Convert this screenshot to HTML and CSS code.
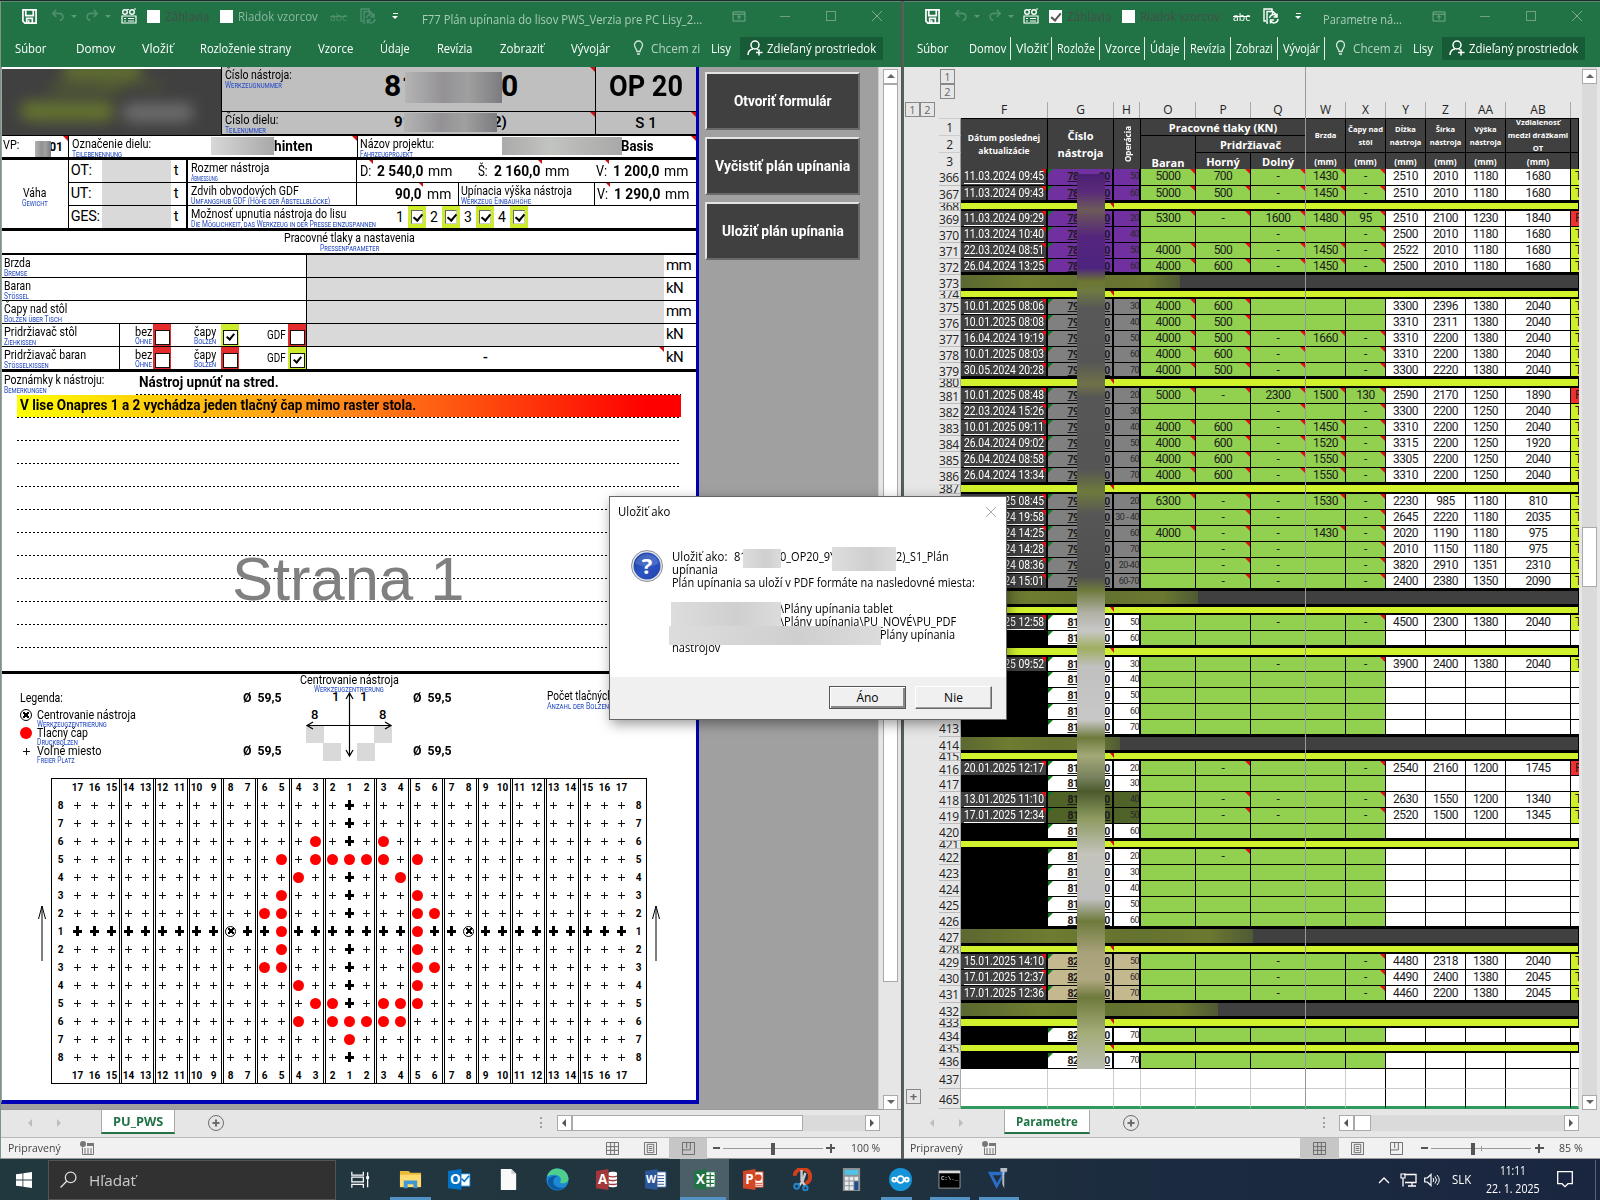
FILE: index.html
```html
<!DOCTYPE html>
<html lang="sk">
<head>
<meta charset="utf-8">
<title>Plán upínania</title>
<link rel="stylesheet" href="styles.css">
</head>
<body>
<svg class="defs" width="0" height="0">
  <symbol id="save" viewBox="0 0 16 16"><path d="M1 1h14v14H3l-2-2zM4 1v6h8V1M5 15v-5h6v5" fill="none" stroke="currentColor" stroke-width="1.8"/><path d="M6 12h2v3H6z" fill="currentColor"/></symbol>
  <symbol id="undo" viewBox="0 0 16 16"><path d="M6 1L2 5l4 4M2 5h7c6 0 6 7 1 8" fill="none" stroke="currentColor" stroke-width="1.8"/></symbol>
  <symbol id="redo" viewBox="0 0 16 16"><path d="M10 1l4 4-4 4M14 5H7C1 5 1 12 6 13" fill="none" stroke="currentColor" stroke-width="1.8"/></symbol>
  <symbol id="cam" viewBox="0 0 16 16"><path d="M1 8h14v7H1z" fill="none" stroke="currentColor" stroke-width="1.2"/><circle cx="4" cy="4" r="2.3" fill="none" stroke="currentColor" stroke-width="1.4"/><circle cx="11" cy="4" r="2.3" fill="none" stroke="currentColor" stroke-width="1.4"/><path d="M3 10.500h2M7 10.500h6M3 13h2M7 13h6M6 1.500h2M13 1h2" stroke="currentColor" stroke-width="1"/></symbol>
  <symbol id="docs" viewBox="0 0 16 16"><path d="M3 13H1V1h8v2M5 15H4V3.500h6l3 3M9.500 3.500V6" fill="none" stroke="currentColor" stroke-width="1.4"/><path d="M6.500 10a4 4 0 0 1 7-2M14 5.500V9h-3.500M15 11a4 4 0 0 1-7 2.500M7.500 15.500V12H11" fill="none" stroke="currentColor" stroke-width="1.5"/></symbol>
  <symbol id="bulb" viewBox="0 0 10 16"><path d="M3.500 11.500C3.500 9 1 8 1 5a4 4 0 0 1 8 0c0 3-2.500 4-2.500 6.500zM3.500 14h3" fill="none" stroke="currentColor" stroke-width="1.300"/></symbol>
  <symbol id="user" viewBox="0 0 16 16"><circle cx="8" cy="5" r="4" fill="none" stroke="currentColor" stroke-width="1.500"/><path d="M1 15c0-3.500 2-5.500 5-6M10 9l1.500 1M12 9.500v6M9 12.500h6.500" fill="none" stroke="currentColor" stroke-width="1.500"/></symbol>
  <symbol id="ribbon" viewBox="0 0 14 12"><path d="M.5 1h13v10H.5zM.5 3.500h13M7 9.500V5M5 7l2-2 2 2" fill="none" stroke="currentColor"/></symbol>
  <symbol id="vgrid" viewBox="0 0 14 14"><path d="M.5.5h13v13H.5zM.5 5h13M.5 9h13M5 .5v13M9 .5v13" fill="none" stroke="currentColor"/></symbol>
  <symbol id="vpage" viewBox="0 0 14 14"><path d="M.5.5h13v13H.5zM3.500 2.500h7v9h-7zM5 5h4M5 7h4M5 9h4" fill="none" stroke="currentColor"/></symbol>
  <symbol id="vbreak" viewBox="0 0 14 14"><path d="M.5.5h13v13H.5zM.5 8.500h8.500V.5M5 .5v6" fill="none" stroke="currentColor"/></symbol>
  <symbol id="macro" viewBox="0 0 14 14"><path d="M2.500 6.500v7h11v-11H7" fill="none" stroke="currentColor"/><path d="M7 2h7v3H7z" fill="currentColor"/><circle cx="3" cy="3" r="3" fill="currentColor"/><path d="M4 8h8M4 10h8M4 12h8" stroke="currentColor" stroke-dasharray="2 1"/></symbol>
  <symbol id="plusc" viewBox="0 0 18 18"><circle cx="9" cy="9" r="7.500" fill="none" stroke="currentColor"/><path d="M9 5.500v7M5.500 9h7" stroke="currentColor" stroke-width="2"/></symbol>
</svg>

<main class="desktop">
<section class="win win-left">
  <header class="ribbon">
    <div class="qat">
      <svg class="i-save"><use href="#save"/></svg><svg class="i16 dim"><use href="#undo"/></svg><i class="dd"></i><svg class="i16 dim"><use href="#redo"/></svg><i class="dd"></i><svg class="i-cam"><use href="#cam"/></svg>
      <span class="cb"></span><span class="q1" data-w="44">Záhlavia</span><span class="cb"></span><span class="q2 lit" data-w="80">Riadok vzorcov</span><s class="dim" data-w="17">abc</s><svg class="i-docs dim"><use href="#docs"/></svg><i class="more"></i>
      <span class="title" data-w="280">F77 Plán upínania do lisov PWS_Verzia pre PC Lisy_2...</span>
      <svg class="wc"><use href="#ribbon"/></svg><i class="min"></i><i class="max"></i><svg class="x" viewBox="0 0 10 10"><path d="M0 0l10 10M10 0L0 10"/></svg>
    </div>
    <nav class="tabs">
      <span data-w="31">Súbor</span><span class="dom" data-w="39">Domov</span><span data-w="31">Vložiť</span><span data-w="91">Rozloženie strany</span><span data-w="35">Vzorce</span><span data-w="30">Údaje</span><span data-w="36">Revízia</span><span data-w="44">Zobraziť</span><span data-w="39">Vývojár</span>
      <svg class="bulb"><use href="#bulb"/></svg><span class="tell" data-w="49">Chcem zi</span><span class="lisy" data-w="20">Lisy</span>
      <div class="share"><svg><use href="#user"/></svg><span data-w="109">Zdieľaný prostriedok</span></div>
    </nav>
  </header>

  <div class="work">
    <article class="sheet">
      <div class="head">
        <div class="logo"><i></i><i></i><i></i></div>
        <div class="hc num"><div class="lab"><span data-w="67">Číslo nástroja:</span><small data-w="57">Werkzeugnummer</small></div><strong class="big l">81</strong><strong class="big e">0</strong><i class="smear s1"></i><i class="tri"></i></div>
        <div class="hc op"><strong class="big" data-w="74">OP 20</strong></div>
        <div class="hc part"><div class="lab"><span data-w="53">Číslo dielu:</span><small data-w="41">Teilenummer</small></div><strong class="mid l">91</strong><strong class="mid e">2)</strong><i class="smear s2"></i><i class="tri"></i></div>
        <div class="hc s"><strong class="mid">S 1</strong><i class="tri"></i></div>
      </div>
      <div class="row vp">
        <div class="c vp1"><span data-w="16">VP:</span><strong>01</strong><i class="smear s3"></i><i class="tri"></i></div>
        <div class="c vp2"><div class="lab"><span data-w="79">Označenie dielu:</span><small data-w="50">Teilebenennung</small></div><i class="smear s4"></i><strong data-w="39">hinten</strong><i class="tri"></i></div>
        <div class="c vp3"><div class="lab"><span data-w="74">Názov projektu:</span><small data-w="53">Fahrzeugprojekt</small></div><i class="smear s5"></i><strong data-w="33">Basis</strong><i class="tri"></i></div>
      </div>
      <div class="dims">
        <div class="weight"><span data-w="23">Váha</span><small data-w="26">Gewicht</small></div>
        <div class="wt"><div><span>OT:</span><em></em><u>t</u></div><div><span>UT:</span><em></em><u>t</u></div><div><span>GES:</span><em></em><u>t</u></div></div>
        <div class="dr">
          <div class="line"><div class="lab a"><span data-w="78">Rozmer nástroja</span><small data-w="27">Abmessung</small></div>
            <div class="m bl"><span data-w="11">D:</span><b class="rt" data-w="46">2 540,0</b><span data-w="24">mm</span></div><div class="m m2"><span data-w="10">Š:</span><b class="rt" data-w="46">2 160,0</b><span data-w="24">mm</span></div><div class="m m3"><span data-w="11">V:</span><b class="rt" data-w="46">1 200,0</b><span data-w="24">mm</span></div></div>
          <div class="line"><div class="lab a"><span data-w="108">Zdvih obvodových GDF</span><small data-w="139">Umfangshub GDF (Höhe der Abstellblöcke)</small></div>
            <div class="m bl z"><b class="rt" data-w="27">90,0</b><span data-w="24">mm</span></div><div class="lab upin"><span data-w="111">Upínacia výška nástroja</span><small data-w="70">Werkzeug Einbauhöhe</small></div><div class="m bl m4"><span data-w="11">V:</span><b class="rt" data-w="46">1 290,0</b><span data-w="24">mm</span></div></div>
          <div class="line"><div class="lab poss"><span data-w="155">Možnosť upnutia nástroja do lisu</span><small data-w="185">Die Möglichkeit, das Werkzeug in der Presse einzuspannen</small></div>
            <div class="checks"><span>1</span><i class="ck on"></i><span>2</span><i class="ck on"></i><span>3</span><i class="ck on"></i><span>4</span><i class="ck on"></i></div></div>
        </div>
      </div>
      <div class="sect"><span class="mid-o" data-w="131">Pracovné tlaky a nastavenia</span><small class="mid-o" data-w="59">Pressenparameter</small></div>
      <div class="press">
        <div class="pr"><div class="lab"><span data-w="27">Brzda</span><small data-w="23">Bremse</small></div><em></em><u>mm</u></div>
        <div class="pr"><div class="lab"><span data-w="27">Baran</span><small data-w="25">Stössel</small></div><em></em><u>kN</u></div>
        <div class="pr"><div class="lab"><span data-w="63">Čapy nad stôl</span><small data-w="58">Bolzen über Tisch</small></div><em></em><u>mm</u></div>
        <div class="pr"><div class="lab half"><span data-w="73">Pridržiavač stôl</span><small data-w="32">Ziehkissen</small></div><div class="opt"><p><span data-w="17">bez</span><small data-w="17">Ohne</small></p><i class="bx red"></i><p><span data-w="22">čapy</span><small data-w="22">Bolzen</small></p><i class="bx yes"></i><p><span class="gd" data-w="19">GDF</span></p><i class="bx red"></i></div><em></em><u>kN</u></div>
        <div class="pr"><div class="lab half"><span data-w="82">Pridržiavač baran</span><small data-w="45">Stösselkissen</small></div><div class="opt"><p><span data-w="17">bez</span><small data-w="17">Ohne</small></p><i class="bx red"></i><p><span data-w="22">čapy</span><small data-w="22">Bolzen</small></p><i class="bx red"></i><p><span class="gd" data-w="19">GDF</span></p><i class="bx yes"></i></div><em class="blank">-<i class="tri"></i></em><u>kN</u></div>
      </div>
      <div class="notes">
        <div class="n0"><div class="lab"><span data-w="100">Poznámky k nástroju:</span><small data-w="43">Bemerkungen</small></div><b><span data-w="140">Nástroj upnúť na stred.</span></b></div>
        <div class="nl hot"><span data-w="396">V lise Onapres 1 a 2 vychádza jeden tlačný čap mimo raster stola.</span></div>
        <div class="nl"></div><div class="nl"></div><div class="nl"></div><div class="nl"></div><div class="nl"></div><div class="nl"></div><div class="nl"></div><div class="nl"></div><div class="nl"></div><div class="nl"></div>
        <div class="water">Strana 1</div>
      </div>
      <div class="legend">
        <div class="lg"><span class="lt" data-w="43">Legenda:</span>
          <div><i class="ox"></i><p><span data-w="99">Centrovanie nástroja</span><small data-w="70">Werkzeugzentrierung</small></p></div>
          <div><i class="dot"></i><p><span data-w="51">Tlačný čap</span><small data-w="41">Druckbolzen</small></p></div>
          <div><i class="pl"></i><p><span data-w="64">Voľné miesto</span><small data-w="38">Freier Platz</small></p></div></div>
        <div class="dia"><b data-w="39">Ø&nbsp; 59,5</b><b data-w="39">Ø&nbsp; 59,5</b></div>
        <div class="center"><span class="mid-o" data-w="99">Centrovanie nástroja</span><small class="mid-o" data-w="70">Werkzeugzentrierung</small>
          <svg width="90" height="70" viewBox="0 0 90 70"><path d="M2 33h18v18H2zM19 51h18v18H19zM53 51h18v18H53zM70 33h18v18H70z" fill="#d9d9d9"/><path d="M45.500 1v63M3 33.500h84M42 7l3.500-6L49 7M42 58l3.500 6 3.500-6M9 30l-6 3.500L9 37M81 30l6 3.500-6 3.500" fill="none" stroke="#000" stroke-width="1.200"/><g font-family="Roboto" font-weight="500" font-size="13"><text x="28" y="9">1</text><text x="56" y="9">1</text><text x="7" y="27">8</text><text x="75" y="27">8</text></g></svg></div>
        <div class="dia d2"><b data-w="39">Ø&nbsp; 59,5</b><b data-w="39">Ø&nbsp; 59,5</b></div>
        <div class="lab cnt"><span data-w="95">Počet tlačných čapov</span><small data-w="64">Anzahl der Bolzen-</small></div>
      </div>
      <div class="boardrow"><svg class="arr" viewBox="0 0 10 56"><path d="M5 56V1M1.500 14L5 1l3.500 13" fill="none" stroke="#000"/></svg><div class="board" id="board"></div><svg class="arr" viewBox="0 0 10 56"><path d="M5 56V1M1.500 14L5 1l3.500 13" fill="none" stroke="#000"/></svg></div>
    </article>
    <aside class="btns"><button><span data-w="98">Otvoriť formulár</span></button><button><span data-w="135">Vyčistiť plán upínania</span></button><button><span data-w="122">Uložiť plán upínania</span></button></aside>
    <div class="vs"><i class="up"></i><i class="th"></i><i class="dn"></i></div>
  </div>

  <div class="sheets"><i class="na"></i><i class="na nx"></i><b class="tab"><span data-w="50">PU_PWS</span></b><svg class="pc"><use href="#plusc"/></svg><i class="dots"></i><div class="hs"><i class="lf"></i><i class="ht"></i><i class="rb"></i></div></div>
  <div class="status"><span data-w="53">Pripravený</span><svg class="mc"><use href="#macro"/></svg><div class="vw"><i><svg><use href="#vgrid"/></svg></i><i><svg><use href="#vpage"/></svg></i><i class="on"><svg><use href="#vbreak"/></svg></i></div><i class="zm"></i><div class="zl"><i></i></div><i class="zp"></i><span class="pct" data-w="29">100 %</span></div>
</section>

<section class="win win-right">
  <header class="ribbon">
    <div class="qat">
      <svg class="i-save"><use href="#save"/></svg><svg class="i16 dim"><use href="#undo"/></svg><i class="dd"></i><svg class="i16 dim"><use href="#redo"/></svg><i class="dd"></i><svg class="i-cam"><use href="#cam"/></svg>
      <span class="cb on"></span><span class="q1" data-w="44">Záhlavia</span><span class="cb"></span><span class="q2" data-w="80">Riadok vzorcov</span><s data-w="17">abc</s><svg class="i-docs"><use href="#docs"/></svg><i class="more"></i>
      <span class="title" data-w="79">Parametre ná...</span>
      <svg class="wc"><use href="#ribbon"/></svg><i class="min"></i><i class="max"></i><svg class="x" viewBox="0 0 10 10"><path d="M0 0l10 10M10 0L0 10"/></svg>
    </div>
    <nav class="tabs tight">
      <span data-w="31">Súbor</span><span class="t" data-w="37">Domov</span><span class="t" data-w="31">Vložiť</span><span class="t" data-w="38">Rozlože</span><span class="t" data-w="35">Vzorce</span><span class="t" data-w="30">Údaje</span><span class="t" data-w="36">Revízia</span><span class="t" data-w="37">Zobrazi</span><span class="t" data-w="37">Vývojár</span>
      <svg class="bulb"><use href="#bulb"/></svg><span class="tell" data-w="49">Chcem zi</span><span class="lisy" data-w="20">Lisy</span>
      <div class="share"><svg><use href="#user"/></svg><span data-w="109">Zdieľaný prostriedok</span></div>
    </nav>
  </header>
  <div class="work2">
    <div class="outl"><div class="ob"><i>1</i><i>2</i></div><div class="oe"><i>+</i></div></div>
    <div class="grid" id="grid"></div>
    <div class="vs v2"><i class="up"></i><i class="th"></i><i class="dn"></i></div>
  </div>
  <div class="sheets"><i class="na"></i><i class="na nx"></i><b class="tab"><span data-w="62">Parametre</span></b><svg class="pc"><use href="#plusc"/></svg><i class="dots"></i><div class="hs"><i class="lf"></i><i class="ht"></i><i class="rb"></i></div></div>
  <div class="status"><span data-w="53">Pripravený</span><svg class="mc"><use href="#macro"/></svg><div class="vw"><i class="on"><svg><use href="#vgrid"/></svg></i><i><svg><use href="#vpage"/></svg></i><i><svg><use href="#vbreak"/></svg></i></div><i class="zm"></i><div class="zl"><i></i></div><i class="zp"></i><span class="pct" data-w="24">85 %</span></div>
</section>
</main>

<div class="dialog">
  <div class="dt"><span data-w="52">Uložiť ako</span><svg viewBox="0 0 10 10"><path d="M0 0l10 10M10 0L0 10"/></svg></div>
  <div class="db">
    <svg class="q" viewBox="0 0 32 32"><defs><linearGradient id="qb" x1="0" y1="0" x2="1" y2="1"><stop offset="0" stop-color="#1c3f9e"/><stop offset=".5" stop-color="#2b55c4"/><stop offset="1" stop-color="#2340a8"/></linearGradient></defs><circle cx="16" cy="16" r="15.500" fill="#e4e6ea" stroke="#8b8f98"/><circle cx="16" cy="16" r="13.500" fill="url(#qb)"/><path d="M4 13a12.500 12.500 0 0 1 24 0c-8 5-16 5-24 0" fill="#fff" opacity=".15"/><text x="16" y="24" text-anchor="middle" font-family="Open Sans" font-weight="700" font-size="22" fill="#fff">?</text></svg>
    <div class="msg">
      <p><span data-w="55">Uložiť ako:</span><span class="f" data-w="13">81</span><i class="sm a"></i><span data-w="56">0_OP20_9Y</span><i class="sm b"></i><span data-w="53">2)_S1_Plán</span></p>
      <p><span data-w="46">upínania</span></p>
      <p><span data-w="303">Plán upínania sa uloží v PDF formáte na nasledovné miesta:</span></p>
      <p></p>
      <p class="i1"><span data-w="113">\Plány upínania tablet</span></p>
      <p class="i1"><span data-w="176">\Plány upínania\PU_NOVÉ\PU_PDF</span></p>
      <p class="i2"><span data-w="75">Plány upínania</span></p>
      <p><span data-w="48">nástrojov</span></p>
      <i class="sm c"></i><i class="sm d"></i>
    </div>
  </div>
  <div class="df"><button class="def">Áno</button><button>Nie</button></div>
</div>

<footer class="task">
  <svg class="start" viewBox="0 0 16 16"><path d="M0 2.300l6.500-.9v6.200H0zM7.300 1.300L16 0v7.600H7.300zM0 8.400h6.500v6.200L0 13.700zM7.300 8.400H16V16l-8.700-1.300z" fill="#fff"/></svg>
  <div class="search"><svg viewBox="0 0 16 16"><circle cx="10" cy="6" r="5" fill="none" stroke="#ddd" stroke-width="1.200"/><path d="M6.500 9.500L.5 15.500" stroke="#ddd" stroke-width="1.300"/></svg><span data-w="47">Hľadať</span></div>
  <div class="apps">
    <i><svg viewBox="0 0 24 24"><path d="M4 4v3.500h12V4M4 20.500V17h12v3.500M4 9.500h12v5H4zM20.500 4.500v15.500" fill="none" stroke="#fff" stroke-width="1.300"/><path d="M19 8.500h3v3h-3z" fill="#fff"/></svg></i>
    <i class="run"><svg viewBox="0 0 24 24"><path d="M1 3h9l2 2h11v14H1z" fill="#e9b93a"/><path d="M1 7h22v13H1z" fill="#ffdb70"/><path d="M5 21v-8h14v8h-4v-4H9v4z" fill="#3f97d3"/></svg></i>
    <i><svg viewBox="0 0 24 24"><path d="M12 6h11v13H12z" fill="#fff" stroke="#0072c6"/><path d="M14 11l3 3 5-6" stroke="#0072c6" stroke-width="1.600" fill="none"/><path d="M0 3l14-2v22L0 21z" fill="#0072c6"/><text x="2" y="17" class="gl">O</text></svg></i>
    <i><svg viewBox="0 0 24 24"><path d="M4 1h11l5 5v17H4z" fill="#fafafa"/><path d="M15 1v5h5" fill="#ccc"/></svg></i>
    <i><svg viewBox="0 0 24 24"><circle cx="12" cy="12" r="11.500" fill="#1b8ad3"/><path d="M1 9C4-3 22-2 23.500 11c0 5-6 6-9 4 3-4-1-8-6-8-3 0-6 1-7.500 2" fill="#4fcf8d"/><path d="M8 12c-2 6 4 10 12 8-7 6-17 2-18-6 0-4 6-7 10-5-2 0-3.500 1-4 3" fill="#0c59a4"/></svg></i>
    <i><svg viewBox="0 0 24 24"><path d="M14 5c2-1.500 7-1.500 9 0v14c-2 1.500-7 1.500-9 0z" fill="#fff"/><path d="M14 8.500c2 1 7 1 9 0M14 12.500c2 1 7 1 9 0M14 16.500c2 1 7 1 9 0" fill="none" stroke="#a4373a" stroke-width="1.500"/><path d="M1 3l13-2v22L1 21z" fill="#a4373a"/><text x="3" y="17" class="gl">A</text></svg></i>
    <i><svg viewBox="0 0 24 24"><path d="M12 4h11v16H12z" fill="#fff" stroke="#2b579a"/><path d="M14 8h7M14 11h7M14 14h7M14 17h7" stroke="#2b579a"/><path d="M1 3l13-2v22L1 21z" fill="#2b579a"/><text x="2" y="16" class="gl sw">W</text></svg></i>
    <i class="act"><svg viewBox="0 0 24 24"><path d="M12 4h11v16H12z" fill="#fff" stroke="#217346"/><path d="M13 8h9M13 12h9M13 16h9M18 5v14" stroke="#217346" stroke-width="1.300"/><path d="M1 3l13-2v22L1 21z" fill="#217346"/><text x="3" y="17" class="gl">X</text></svg></i>
    <i><svg viewBox="0 0 24 24"><path d="M12 4h10v16H12z" fill="#fff" stroke="#d24726"/><circle cx="17" cy="10" r="3.500" fill="#d24726"/><path d="M14 16h7M14 18h7" stroke="#d24726"/><path d="M1 3l13-2v22L1 21z" fill="#d24726"/><text x="3.500" y="17" class="gl">P</text></svg></i>
    <i><svg viewBox="0 0 24 24"><path d="M4 8C4-1 20-2 20 9c0 4-2 6-5 7" stroke="#d5401c" stroke-width="4" fill="none"/><path d="M11 2v11l4 6M15 5l-3 9-4 5" stroke="#c8ccd0" stroke-width="2.500" fill="none"/><circle cx="6" cy="19" r="2.600" fill="none" stroke="#2387d0" stroke-width="2"/><circle cx="15" cy="21" r="2.300" fill="none" stroke="#2387d0" stroke-width="2"/></svg></i>
    <i><svg viewBox="0 0 24 24"><path d="M3 0h18v24H3z" fill="#8a9196"/><path d="M5 2h14v5H5z" fill="#4fc3e8"/><path d="M5 9h4v4H5zM10 9h4v4h-4zM15 9h4v4h-4zM5 14h4v4H5zM10 14h4v4h-4zM5 19h4v4H5zM10 19h4v4h-4z" fill="#e8eaec"/><path d="M15 14h4v9h-4z" fill="#1d4d8c"/></svg></i>
    <i class="run sh"><svg viewBox="0 0 24 24"><circle cx="12" cy="12" r="12" fill="#1593d8"/><g fill="none" stroke="#fff" stroke-width="2"><circle cx="12" cy="12" r="3.500"/><circle cx="5.500" cy="12" r="2"/><circle cx="18.500" cy="12" r="2"/></g></svg></i>
    <i class="run"><svg viewBox="0 0 24 24"><path d="M1 3h22v18H1z" fill="#000" stroke="#9a9a9a"/><path d="M1 3h22v2.500H1z" fill="#ddd"/><text x="3" y="12" font-family="Liberation Mono" font-size="6" fill="#fff">C:\._</text></svg></i>
    <i class="run"><svg viewBox="0 0 24 24"><path d="M1 4h19L10 22zM6 7.500l4.500 8 4.500-8z" fill="#2b6cc4" fill-rule="evenodd"/><path d="M14 0h7v4h-3v17l-2-4V4h-2z" fill="#b9bec4"/></svg></i>
  </div>
  <div class="tray">
    <svg class="chev" viewBox="0 0 12 8"><path d="M1 7l5-5 5 5" fill="none" stroke="#fff" stroke-width="1.300"/></svg>
    <svg class="net" viewBox="0 0 17 14"><path d="M4 1.500h12v8H5M3 5v8.500M8 13h8M12 9.500V13" fill="none" stroke="#fff" stroke-width="1.300"/><path d="M1 1h4v4H1z" fill="none" stroke="#fff" stroke-width="1.200"/></svg>
    <svg class="snd" viewBox="0 0 17 14"><path d="M.7 5h2.600L7 1.500v11L3.300 9H.7z" fill="none" stroke="#fff" stroke-width="1.200"/><path d="M9 5q1.500 2 0 4M11 3.500q3 3.500 0 7M13 2q4.500 5 0 10" fill="none" stroke="#fff"/></svg>
    <span class="slk" data-w="19">SLK</span>
    <div class="clk"><span class="mid-o" data-w="26">11:11</span><span class="mid-o" data-w="54">22. 1. 2025</span></div>
    <svg class="note" viewBox="0 0 16 17"><path d="M.7.7h14.600v12H11l-3 3-3-3H.7z" fill="none" stroke="#fff" stroke-width="1.300"/></svg>
  </div>
</footer>
<script src="script.js"></script>
</body>
</html>
```
FILE: styles.css
```css
*{box-sizing:border-box}
body{margin:0;width:1600px;height:1200px;overflow:hidden;background:#1c2a2c;font-family:"Open Sans","Noto Sans",sans-serif;font-size:12px;display:flex;flex-direction:column}
i,u,s,em{font-style:normal;text-decoration:none}
p{margin:0}
svg{display:block;flex:none}
.defs{position:absolute}
[data-w]{display:inline-block;white-space:nowrap;flex:none}
[data-w]>span{display:inline-block;transform-origin:0 50%}
.mid-o{align-self:center}
.desktop{display:flex;height:1159px;padding-top:1px}
.win{display:flex;flex-direction:column;background:#e6e6e6}
.win-left{width:902px;border-left:1px solid #7d9587;border-right:1px solid #555}
.win-right{width:698px;border-left:2px solid #55605a}
.ribbon{height:66px;background:#217346;color:#fff;border-top:1px solid #5d8a70}
.qat{display:flex;align-items:center;height:28px}
.qat>*{flex:none}
.i-save{width:15px;height:15px;margin-left:21px}
.i16{width:14px;height:14px;margin-left:14px}
.i16+.dd+.i16{margin-left:8px}
.dim{color:#4f8f6d}
.dd{border:3px solid transparent;border-top-color:#5d9878;border-bottom:0;margin-left:6px}
.i-cam{width:16px;height:16px;margin-left:9px}
.win-left .i-cam{margin-left:10px}
.cb{width:13px;height:13px;background:#fff;margin-left:10px}
.cb.on::after{content:"";display:block;width:4px;height:8px;border:solid #555;border-width:0 2px 2px 0;margin:1px 0 0 4px;transform:rotate(40deg)}
.qat .q1{margin-left:5px;color:#444d48}
.q1+.cb{margin-left:11px}
.qat .q2{margin-left:5px;color:#444d48}
.qat .q2.lit{color:#8cb8a0}
.qat s{margin-left:13px;font-size:11px}
.win-left .qat s{margin-left:12px}
.qat s>span{text-decoration:line-through}
.i-docs{width:16px;height:16px;margin-left:13px}
.more{width:5px;height:7px;margin-left:17px;border-top:1px solid #fff;position:relative}
.more::after{content:"";position:absolute;top:2px;left:-1px;border:3.500px solid transparent;border-top-color:#fff;border-bottom:0}
.qat .title{margin-left:24px;padding-top:7px;color:#a9cdb9}
.win-right .qat .title{margin-left:22px}
.wc{width:14px;height:11px;margin-left:30px;color:#7fae94}
.min{width:10px;height:1px;background:#6ea286;margin-left:34px}
.max{width:10px;height:10px;border:1px solid #6ea286;margin-left:36px}
.x{width:10px;height:10px;margin-left:36px;stroke:#7fae94;fill:none;overflow:visible}
.tabs{display:flex;align-items:center;height:36px;padding-left:14px;gap:27px;font-size:12px}
.tabs .dom{margin-left:3px}
.tabs .bulb{width:11px;height:16px;margin-left:-4px;color:#d5e6dc}
.tabs .tell{margin-left:-20px;color:#b5d3c2}
.tabs .lisy{margin-left:-16px}
.share{display:flex;align-items:center;gap:4px;margin-left:-18px;background:#185c37;width:143px;height:23px;padding-left:7px}
.share svg{width:16px;height:16px}
.tabs.tight{gap:0;padding-left:13px}
.tight .t{border-right:1px solid #e4efe8;height:23px;line-height:23px;box-sizing:content-box;padding:0 4px 0 5px}
.tight>.t:nth-child(2){margin-left:16px}
.tight .bulb{margin-left:10px}
.tight .tell{margin-left:7px}.tight .lisy{margin-left:11px}.tight .share{margin-left:9px}
.work{display:flex;height:1043px;background:#a0a0a0;border-bottom:1px solid #999}
.sheet{width:698px;height:1037px;border:solid #0000b4;border-width:0 3px 4px 0;border-left:1px solid #a0a0a0;background:#fff;font-family:Roboto,"Liberation Sans",sans-serif;font-size:13.500px;color:#000;flex:none;overflow:hidden}
.sheet small{font-variant:small-caps;font-size:9.500px;line-height:8px;color:#2a4fc4;height:8px;display:block}
.lab{display:flex;flex-direction:column;line-height:13px;padding:1px 0 0 3px;position:relative}
.tri{position:absolute;right:0;top:0;border:5px solid transparent;border-width:0 5px 5px 0;border-right-color:#d01010}
.smear{position:absolute;background:linear-gradient(90deg,#b4b4b4,#939195 40%,#a0a0a0 65%,#7c7b80);z-index:1}
.head{display:grid;grid-template-columns:219px 374px 1fr;grid-template-rows:45px 23px;height:69px;border-bottom:1px solid #000}
.logo{grid-row:1/3;background:#404040;position:relative;overflow:hidden;margin-top:2px}
.logo i{position:absolute;filter:blur(7px);background:#64732f;border-radius:20px}
.logo i:nth-child(1){left:60px;top:-6px;width:80px;height:16px;box-shadow:-16px 18px 0 -4px #56622f,28px 14px 0 -6px #56622f}
.logo i:nth-child(2){left:18px;top:32px;width:95px;height:20px}
.logo i:nth-child(3){left:120px;top:34px;width:72px;height:19px;background:#6c6c6e}
.hc{background:#bfbfbf;border:solid #000;border-width:0 0 1px 1px;position:relative}
.hc.op,.hc.s{display:flex;align-items:center;justify-content:center}
.hc.op{padding-bottom:6px}
.big{font-size:30px;font-weight:700;line-height:36px}
.num .big{position:absolute;top:1px}.num .big.l{left:162px}.num .big.e{left:279px}
.s1{left:183px;top:5px;width:97px;height:31px}
.mid{font-size:15px;font-weight:500}
.part .mid{position:absolute;top:1px;font-weight:700}.part .l{left:172px}.part .e{left:271px}
.s2{left:182px;top:1px;width:93px;height:19px}
.row{display:flex}
.vp{height:24px;border-bottom:3px solid #000}
.c{position:relative}
.vp1{width:66px;padding:2px 0 0 1px;line-height:12px}
.vp1 strong{position:absolute;right:5px;top:5px;font-size:12px}
.s3{left:33px;top:5px;width:16px;height:16px}
.vp2{width:289px;border-left:1px solid #000}
.vp2 strong,.vp3 strong{position:absolute;top:2px;left:205px;font-size:14px}
.vp3{flex:1;border-left:1px solid #000}.vp3 strong{left:263px}
.vp3 .lab{padding-left:2px}
.s4{left:142px;top:1px;width:63px;height:18px;background:linear-gradient(90deg,#d8d8d8,#a8a8a8)}
.s5{left:144px;top:1px;width:120px;height:18px;background:linear-gradient(90deg,#aaa,#c2c4c0 40%,#a8a8a8)}
.dims{display:flex;height:71px;border-bottom:3px solid #000}
.weight{width:66px;display:flex;flex-direction:column;align-items:center;padding-top:25px;line-height:14px}
.wt{width:121px;border:solid #000;border-width:0 2px 0 1px}
.wt div{display:flex;height:23px;border-bottom:1px solid #000;line-height:21px;font-size:14.500px}
.wt div:last-child{border:0}
.wt span{width:33px;padding-left:2px;letter-spacing:-.3px}
.wt em{width:69px;height:22px;background:#d9d9d9}
.wt u{padding-left:3px}
.dr{flex:1}
.line{display:flex;height:23px;border-bottom:1px solid #000}
.line:last-child{border:0}
.line .a{width:168px}
.m{display:flex;align-items:center;font-size:15px;gap:5px;padding-left:3px;width:102px}
.bl{border-left:1px solid #000}
.m span:first-child{margin-right:1px}
.m.m2{margin-left:17px}.m.m3{margin-left:16px}
.m b,.nl,.n0 b{font-weight:700}
.m b.rt{position:relative}
.m b.rt::after{content:"";position:absolute;right:-1px;top:-2px;border:4px solid transparent;border-width:0 4px 4px 0;border-right-color:#d01010}
.m span+b.rt::after{right:auto;left:-8px}
.m2 span+b.rt::after{left:auto;right:-2px}
.m.z{padding-left:38px}
.upin{width:136px;border-left:1px solid #000;padding-left:2px}
.m4{padding-left:2px}
.poss{width:207px}
.checks{display:flex;align-items:flex-start;font-size:14px;line-height:22px}
.checks span{width:10px;text-align:center}
.ck{width:18px;height:22px;border:3px solid #cdec2b;border-width:4px 3px;background:#fff;margin:0 3px;position:relative}
.ck::before{content:"";position:absolute;inset:0;border:1px solid #666;border-right-color:#ccc;border-bottom-color:#ccc}
.ck.on::after,.bx.yes::after{content:"";position:absolute;left:4px;top:2px;width:4px;height:7px;border:solid #000;border-width:0 2px 2px 0;transform:rotate(40deg)}
.sect{height:24px;border-bottom:2px solid #000;display:flex;flex-direction:column;align-items:center;line-height:13px}
.press{height:117px;border-bottom:3px solid #000}
.pr{height:23px;border-bottom:1px solid #000;display:flex}
.pr:last-child{border:0}
.pr .lab{width:304px;padding-left:2px;padding-top:1px}
.pr .half{width:118px;border-right:1px solid #000}
.opt{width:186px;display:flex}
.opt p{display:flex;flex-direction:column;align-items:flex-end;width:34px;line-height:13px;padding-top:1px;padding-right:1px}
.opt p:first-child{width:33px}
.opt p+i+p{width:50px;padding-right:5px}
.opt p:nth-child(5){padding-right:2px;width:49px}
.opt .gd{margin-top:3px}
.opt small{margin-top:-1px}
.bx{width:18px;height:22px;background:#e52b2b;position:relative}
.bx.yes{background:#cdec2b}
.bx::before{content:"";position:absolute;left:2px;top:6px;width:13px;height:13px;border:1px solid #111;background:#fff}
.bx.yes::after{left:7px;top:8px;width:3px;height:6px}
.pr em{flex:1;background:#d9d9d9;border-left:1px solid #000;height:22px;position:relative}
.pr em.blank{background:none;text-align:center;line-height:20px;font-weight:700}
.pr u{width:32px;padding-left:2px;line-height:21px;font-size:15px;letter-spacing:-.6px}
.notes{height:302px;border-bottom:3px solid #000;position:relative}
.n0{display:flex;height:23px}
.n0 .lab{width:134px;padding-left:2px;padding-top:1px}
.n0 b{flex:1;margin-right:15px;font-size:14.500px;line-height:21px;padding-left:3px;background:repeating-linear-gradient(90deg,#000 0 2px,transparent 2px 4px) 0 100%/100% 1px no-repeat}
.nl{height:23px;margin:0 15px;background:repeating-linear-gradient(90deg,#000 0 2px,transparent 2px 4px) 0 100%/100% 1px no-repeat}
.nl.hot{background:repeating-linear-gradient(90deg,#000 0 2px,#fff 2px 4px) 0 100%/100% 1px no-repeat,linear-gradient(90deg,#ff0,#ff8c1a 48%,#fe0000 95%);font-size:14.500px;line-height:21px;padding-left:3px}
.water{position:absolute;left:230px;top:172px;font:61.500px/70px "Liberation Sans",Arial,sans-serif;color:#808080;white-space:nowrap}
.legend{height:104px;display:flex}
.lg{width:224px;padding:16px 0 0 18px}
.lg .lt{line-height:14px;display:block;margin-bottom:3px}
.lg div{display:flex;height:18px;align-items:flex-start}
.lg p{display:flex;flex-direction:column;line-height:14px}
.lg small{margin-top:-1px}
.lg i{width:12px;height:12px;margin:2px 5px 0 0;flex:none}
.dot,.p-r{border-radius:50%;background:#fe0000}
.ox,.p-x{border:1.500px solid #000;border-radius:50%;background:linear-gradient(45deg,transparent 40%,#000 40% 60%,transparent 60%) 50%/6px 6px no-repeat,linear-gradient(-45deg,transparent 40%,#000 40% 60%,transparent 60%) 50%/6px 6px no-repeat}
.pl,.p-p{background:linear-gradient(#111,#111) 50% 50%/7px 1px no-repeat,linear-gradient(#111,#111) 50% 50%/1px 7px no-repeat}
.p-b{background:linear-gradient(#000,#000) 50% 50%/9px 3px no-repeat,linear-gradient(#000,#000) 50% 50%/3px 10px no-repeat}
.dia{display:flex;flex-direction:column;gap:37px;padding:15px 0 0 17px;width:77px;font-size:13.500px;line-height:16px;font-weight:500}
.center{width:92px;display:flex;flex-direction:column;align-items:center;line-height:12px;margin-top:-1px}
.center>*{flex:none}
.center svg{overflow:visible;margin-top:-1px}
.d2{padding-left:18px;width:152px}
.cnt{padding-top:15px;padding-left:0}
.boardrow{display:flex;align-items:center;padding-left:35px;gap:4px}
.arr{width:10px;height:56px;margin-top:4px}
.board{display:grid;grid-template-columns:repeat(35,17px);grid-auto-rows:18px;border:1px solid #000;height:306px;width:596px}
.board>div{display:flex;align-items:center;justify-content:center;font-size:10px;font-weight:700;margin-top:-1px;height:18px}
.board .dbl{border-right:3px double #000;margin-right:-1.500px;padding-left:1.500px}
.board i{width:11px;height:11px}
.btns{width:179px;padding:5px 0 0 6px;display:flex;flex-direction:column;gap:7px}
.btns button{width:155px;height:58px;background:#404040;color:#fff;border:2px solid #e3e3e3;border-right-color:#6a6a6a;border-bottom-color:#6a6a6a;font:bold 14.500px Roboto,sans-serif;padding:0}
.vs{width:23px;background:#e6e6e6;padding:2px 4px 0;display:flex;flex-direction:column;border-left:1px solid #ccc}
.vs i{display:block;flex:none;width:15px;background:#fff;border:1px solid #aaa;position:relative}
.vs .up,.vs .dn{height:15px}
.vs .up::after,.vs .dn::after{content:"";position:absolute;left:3px;top:4px;border:4px solid transparent;border-top:0;border-bottom-color:#666}
.vs .dn::after{border:4px solid transparent;border-bottom:0;border-top-color:#666}
.vs .th{height:898px}
.vs .dn{margin-top:113px}
.sheets{display:flex;height:28px;align-items:flex-start;background:#e6e6e6;border-bottom:1px solid #b9b9b9}
.na{border:4px solid transparent;border-right:4px solid #bdbdbd;border-left:0;margin:9px 0 0 27px}
.na.nx{border:4px solid transparent;border-left:4px solid #bdbdbd;border-right:0;margin-left:25px}
.tab{margin-left:40px;width:74px;height:24px;background:#fff;border-bottom:2px solid #217346;color:#217346;display:flex;justify-content:center;align-items:center;font-size:12.500px;border-left:1px solid #aaa;border-right:1px solid #aaa;padding-top:1px}
.pc{width:18px;height:18px;color:#6d6d6d;margin:4px 0 0 32px}
.dots{width:2px;height:11px;margin:7px 0 0 315px;background:repeating-linear-gradient(#a0a0a0 0 2px,transparent 2px 4.500px)}
.hs{display:flex;margin:5px 0 0 15px;width:323px;height:16px;background:#dadada}
.hs i{height:16px;background:#fff;border:1px solid #aaa;position:relative}
.hs .lf,.hs .rb{width:15px}
.hs .lf::after,.hs .rb::after{content:"";position:absolute;left:4px;top:3px;border:4px solid transparent;border-left:0;border-right-color:#555}
.hs .rb::after{border:4px solid transparent;border-right:0;border-left-color:#555}
.hs .ht{width:231px}.hs .rb{margin-left:auto}
.status{display:flex;height:21px;align-items:center;background:#f1f1f1;color:#444;padding-left:7px;font-size:11.500px;border-bottom:1px solid #999}
.status [data-w]>span{position:relative;top:-1px}
.mc{width:14px;height:14px;margin-left:19px;color:#777}
.vw{display:flex;margin-left:499px;color:#666;height:21px}
.vw i{width:38px;display:flex;align-items:center;justify-content:center}
.vw .on{background:#c6c6c6}
.vw svg{width:13px;height:13px}
.zm{width:7px;height:2px;background:#555;margin-left:6px}
.zl{width:100px;height:1px;background:#999;margin:0 3px;position:relative}
.zl i{position:absolute;left:48px;top:-5px;width:4px;height:12px;background:#555}
.zp{width:9px;height:9px;background:linear-gradient(#555,#555) 50%/9px 2px no-repeat,linear-gradient(#555,#555) 50%/2px 9px no-repeat}
.pct{margin-left:16px}
.win-right .tab{margin-left:41px;width:86px}
.win-right .na:first-child{margin-left:26px}
.win-right .pc{margin-left:32px}
.win-right .dots{margin-left:183px}
.win-right .hs{width:240px;margin-left:14px}.win-right .ht{width:17px}
.win-right .status{padding-left:6px}
.win-right .vw{margin-left:304px}.win-right .vw i{width:38.500px}
.win-right .zm{margin-left:5px}.win-right .zl{margin-right:4px}.win-right .zl i{left:40px}
.win-right .zl::after{content:"";position:absolute;left:50px;top:-2px;width:1px;height:5px;background:#999}
.win-right .pct{margin-left:15px}

.work2{display:flex;height:1043px;background:#e6e6e6}
.outl{width:35px;display:flex;flex-direction:column}
.ob{display:flex;margin:35px 0 0 1px}
.outl i,.colo i{width:15px;height:15px;border:1px solid #888;color:#666;font-size:11px;line-height:13px;text-align:center}
.oe{margin:972px 0 0 2px}
.oe i{display:block;font-weight:700;line-height:12px;font-size:13px}
.grid{width:640px;position:relative;overflow:hidden}
.colo{height:51px;padding:2px 0 0 1px}
.colo i{display:block}
.hdr{display:grid;grid-template-columns:22px 87px 66px 26px 1px 55px 55px 55px 40px 40px 40px 40px 40px 65px 1fr;position:absolute;top:34px;left:0;right:0;height:17px;align-items:end;font-size:12px;line-height:16px;color:#222;text-align:center}
.hdr b{font-weight:400;border-right:1px solid #aaa}
.hdr b:first-child{border:0}
.cols{display:grid;grid-template-columns:22px 87px 66px 27px 55px 55px 55px 40px 40px 40px 40px 40px 65px 1fr}
.fh{height:51px;grid-template-rows:17px 17px 17px;color:#fff;font-size:11px;font-weight:700;border-bottom:1px solid #999}
.fh>div{background:#404040;border:solid #000;border-width:1px 1px 0 0;display:flex;align-items:center;justify-content:center;text-align:center;line-height:13px;overflow:hidden;white-space:nowrap}
.fh>.n{background:#e6e6e6;border:0;border-top:1px solid #ccc;border-right:1px solid #999;color:#222;font-weight:400;font-size:12px;justify-content:flex-end;padding-right:7px}
.fh .s{font-size:8.500px}
.fh .sm7{font-size:7.600px}
.fh .g1{line-height:17px}
.fh .ba{align-items:flex-end;padding-bottom:0}
.fh .v{writing-mode:vertical-rl;font-size:8px}
.fh .v span{transform:rotate(180deg)}
.gr{grid-template-rows:100%;font-family:Roboto,sans-serif;font-size:12px;letter-spacing:-.5px;color:#1b1b1b}
.gr>div{border-right:1px solid #000;border-bottom:1px solid #000;text-align:center;line-height:14px;position:relative;overflow:hidden;white-space:nowrap}
.gr>.n{border:0;border-right:1px solid #aaa;border-bottom:1px solid #bbb;background:#e6e6e6;text-align:right;padding-right:2px;font:12px/17px "Open Sans",sans-serif;letter-spacing:-.2px;color:#222}
.gr .f{background:#404040;color:#fff;letter-spacing:0;border-right-width:2px;display:flex;justify-content:center;align-items:flex-start}
.gr .f>span>span{line-height:13px;height:14px;border-bottom:1px solid #fff}
.gr .f.k{background:#000}
.gr .g{font-weight:700;font-size:10.500px;letter-spacing:-.4px;text-align:right;padding-right:2px;border-right-width:2px;text-decoration:underline;line-height:16px}
.gr .g::before,.tr::before{content:"";position:absolute;left:0;top:0;border:5px solid transparent;border-width:5px 5px 0 0;border-top-color:#0a7a1a}
.gr .g span{margin-right:20px}
.gr .h{font-size:9px;text-align:right;color:#2a2a2a;border-right-width:2px;line-height:14px}
.gr .tr::before{left:auto;right:0;border-width:0 5px 5px 0;border-color:transparent;border-right-color:#e01010}
.gr .o{background:#92d050}
.gr .w{background:#fff}
.gr .fl{text-align:left;padding-left:4px;border-right:0}
.gr .y{background:#cdf02a}.gr .rd{background:#f03030}
.gr.last>div:not(.n){border-bottom-width:3px}
.gr.last .f{border-bottom-width:2px}
.yr .bar{grid-column:2/-1;background:#d0f22c;border-bottom:2px solid #000}
.yr>.n{line-height:8px}
.yr .bar::before{content:"";position:absolute;left:149px;top:0;border:5px solid transparent;border-width:0 4px 5px 0;border-right-color:#d01010}
.dk .bar{grid-column:2/-1;background:#404040;border-bottom:3px solid #000}
.dk .bar i{display:block;height:16px;background:linear-gradient(90deg,#5b6830,#6d7c30 30%,#647230 60%,#6a7830 85%,#4f5a35)}
.em>div:not(.n){background:#fff;border-right-color:#ccc;border-bottom-color:#ccc}
.em>.n{line-height:21px}
.em>div:nth-child(n+9):not(:last-child){border-right-color:#000}
.em.fin>div:not(.n){border-bottom:3px solid #2f9a5f}
.smearcol{position:absolute;left:138px;top:107px;width:28px;height:895px;background:linear-gradient(#4a1f74,#5a2a7a 2%,#6c5a58 4%,#55257d 7%,#4c2480 10.500%,#6c7630 12%,#6d7a40 13%,#585858 15%,#565656 21%,#6f7148 23.500%,#565656 25%,#555 33%,#6e7a3c 35.500%,#565656 38%,#505050 45%,#6e7a3c 46.500%,#b0b0a4 49%,#c8c8c8 51%,#9fae60 53%,#c0c0c0 55%,#c8c8c8 61%,#6e7a3c 63%,#a3a878 65%,#77805c 67.500%,#4a5a2c 69%,#8d9a60 72%,#c4c4bc 76%,#c0c0c0 81%,#6e7a3c 83.500%,#a8a27a 87%,#b0a880 90%,#6e7a3c 92%,#a5ad7a 96%,#b9bdb0)}
.frz{position:absolute;left:366px;top:0;width:1px;bottom:0;background:#999}
.win-right .vs{width:21px;border:0;padding:2px 4px 0 3px}
.vs.v2{background:linear-gradient(90deg,transparent 3px,#dadada 3px 18px,transparent 18px)}
.vs.v2 .th{height:60px;margin-top:443px}
.vs.v2 .dn{margin-top:508px}

.dialog{position:absolute;left:609px;top:496px;width:398px;height:224px;border:1px solid #666;background:#fff;box-shadow:2px 4px 12px rgba(0,0,0,.4);display:flex;flex-direction:column}
.dt{display:flex;justify-content:space-between;align-items:center;height:29px;padding:0 10px 0 8px}
.dt svg{width:10px;height:10px;stroke:#aaa;fill:none}
.db{flex:1;display:flex;padding:24px 0 0 21px}
.q{width:32px;height:32px}
.msg{margin-left:9px;line-height:13px;font-size:12px;position:relative;width:320px}
.msg p{height:13px;display:flex}
.msg .f{margin-left:7px}
.sm{background:linear-gradient(90deg,#ddd,#cfcfcf 60%,#dcdcdc)}
.sm.a{width:38px;height:19px;margin-top:-1px;margin-left:-4px;z-index:1}
.sm.b{width:64px;height:24px;margin-top:-3px;margin-left:-4px;z-index:1}
.sm.a+span{margin-left:-1px}
.msg .i1{padding-left:108px}.msg .i2{padding-left:208px}
.sm.c,.sm.d{position:absolute;left:-1px;top:52px;width:110px;height:25px}
.sm.d{left:-3px;top:76px;width:212px;height:19px}
.df{height:42px;background:#f0f0f0;display:flex;gap:9px;padding:9px 0 0 219px}
.df button{width:77px;height:23px;background:#f0f0f0;border:1px solid #fff;border-right-color:#696969;border-bottom-color:#696969;box-shadow:inset -1px -1px #a0a0a0;font:12px "Open Sans",sans-serif;padding:0}
.df .def{border:1px solid #555;box-shadow:inset 1px 1px #fff,inset -2px -2px #888}

.task{height:41px;display:flex;align-items:center;background:linear-gradient(90deg,#22383f,#20343f 50%,#1b2a3f 75%,#1a2640);color:#fff}
.start{width:16px;height:16px;margin-left:16px}
.search{margin-left:16px;width:288px;height:40px;background:#313131;border:1px solid #555;display:flex;align-items:center;padding-left:11px;gap:12px;font-size:15px;color:#ccc}
.search svg{width:17px;height:17px}
.apps{display:flex;align-items:stretch;height:41px;margin-left:-3px}
.apps i{width:49px;display:flex;align-items:center;justify-content:center;position:relative}
.apps i:first-child{width:52px}
.apps i:nth-child(2){width:50px}
.apps svg{width:23px;height:23px}
.gl{font:700 14px "Open Sans",sans-serif;fill:#fff}
.sw{font-size:11px}
.run::after,.act::after{content:"";position:absolute;left:5px;right:4px;bottom:0;height:3px;background:#5292c4}
.act{background:#4a5f68}.act::after{left:0;right:3px}
.sh::after{right:13px}
.tray{margin-left:auto;display:flex;align-items:center;height:40px;border-right:1px solid #56617a;margin-right:4px;padding-right:22px;font-size:12px}
.chev{width:12px;height:8px}.net{width:17px;height:14px;margin-left:10px}.snd{width:17px;height:14px;margin-left:7px}
.slk{margin-left:11px}
.clk{width:54px;margin-left:15px;display:flex;flex-direction:column;align-items:center;line-height:18px}
.note{width:16px;height:17px;margin-left:17px}
```
FILE: script.js
```js
// Pin raster: 35 columns (k = -17..17) by 17 rows.
const pins = {
  6: [-2, 2], 5: [-4, -2, -1, 0, 1, 2, 4], 4: [-3, 3], 3: [-4, 4], 2: [-5, -4, 4, 5], 1: [-4, 4],
  '-2': [-4, 4], '-3': [-5, -4, 4, 5], '-4': [-3, 4], '-5': [-2, -1, 2, 3, 4], '-6': [-3, -1, 0, 1, 2, 3], '-7': [0]
};
const breaks = [-14, -12, -10, -8, -6, -4, -2, 1, 3, 5, 7, 9, 11, 13];
const order = [0, 8, 7, 6, 5, 4, 3, 2, 1, -2, -3, -4, -5, -6, -7, -8, 0];
let board = '';
for (const r of order) {
  for (let k = -17; k <= 17; k++) {
    const edge = Math.abs(k) === 17;
    let inner;
    if (r === 0) inner = edge ? '' : Math.abs(k) + 1;
    else if (edge) inner = Math.abs(r);
    else if ((pins[r] || []).includes(k)) inner = '<i class="p-r"></i>';
    else if (r === 1 && Math.abs(k) === 7) inner = '<i class="p-x"></i>';
    else inner = `<i class="${r === 1 || k === 0 ? 'p-b' : 'p-p'}"></i>`;
    board += `<div${breaks.includes(k) ? ' class="dbl"' : ''}>${inner}</div>`;
  }
}
document.getElementById('board').innerHTML = board;

// Row: [label, height, date, tool prefix, operation, colour, values O..AC, closes a block]
const P = '#7030a0', S = '#808080', W = '#fff', D = '#4f6228', T = '#c4b88f';
const Y = (n, h) => [n, h, 'Y'], K = (n, h, w) => [n, h, 'K', w];
const rows = [
  [366, 17, '11.03.2024 09:45', '78', '50', P, '5000,700,-,1430,-,2510,2010,1180,1680,T'],
  [367, 17, '11.03.2024 09:43', '78', '60', P, '5000,500,-,1450,-,2510,2010,1180,1680,T', 1], Y(368, 8),
  [369, 16, '11.03.2024 09:29', '78', '20', P, '5300,-,1600,1480,95,2510,2100,1230,1840,F'],
  [370, 16, '11.03.2024 10:40', '78', '40', P, ',,-,,-,2500,2010,1180,1680,T'],
  [371, 16, '22.03.2024 08:51', '78', '50', P, '4000,500,-,1450,-,2522,2010,1180,1680,T'],
  [372, 16, '26.04.2024 13:25', '78', '60', P, '4000,600,-,1450,-,2500,2010,1180,1680,T', 1],
  K(373, 16, 219), Y(374, 8),
  [375, 16, '10.01.2025 08:06', '79', '30', S, '4000,600,,,,3300,2396,1380,2040,T'],
  [376, 16, '10.01.2025 08:08', '79', '40', S, '4000,500,,,,3310,2311,1380,2040,T'],
  [377, 16, '16.04.2024 19:19', '79', '50', S, '4000,500,-,1660,-,3310,2200,1380,2040,T'],
  [378, 16, '10.01.2025 08:03', '79', '60', S, '4000,600,-,,-,3310,2200,1380,2040,T'],
  [379, 16, '30.05.2024 20:28', '79', '70', S, '4000,500,-,,-,3300,2220,1380,2040,T', 1], Y(380, 9),
  [381, 16, '10.01.2025 08:48', '79', '20', S, '5000,-,2300,1500,130,2590,2170,1250,1890,F'],
  [382, 16, '22.03.2024 15:26', '79', '30', S, ',,-,,-,3300,2200,1250,2040,T'],
  [383, 16, '10.01.2025 09:11', '79', '40', S, '4000,600,-,1450,-,3310,2200,1250,2040,T'],
  [384, 16, '26.04.2024 09:02', '79', '50', S, '4000,600,-,1520,-,3315,2200,1250,1920,T'],
  [385, 16, '26.04.2024 08:58', '79', '60', S, '4000,600,-,1550,-,3305,2200,1250,2040,T'],
  [386, 17, '26.04.2024 13:34', '79', '70', S, '4000,600,-,1550,-,3310,2200,1250,2040,T', 1], Y(387, 9),
  [388, 16, '10.01.2025 08:45', '79', '20', S, '6300,-,-,1530,-,2230,985,1180,810,T'],
  [389, 16, '22.03.2024 19:58', '79', '30 - 40', S, ',-,-,,-,2645,2220,1180,2035,T'],
  [390, 16, '26.04.2024 14:25', '79', '60', S, '4000,-,-,1430,-,2020,1190,1180,975,T'],
  [391, 16, '26.04.2024 14:28', '79', '70', S, ',-,-,,-,2010,1150,1180,975,T'],
  [392, 16, '26.04.2024 08:36', '79', '20-40', S, ',-,-,,-,3820,2910,1351,2310,T'],
  [393, 17, '26.04.2024 15:01', '79', '60-70', S, ',-,-,,-,2400,2380,1350,2090,T', 1],
  K(394, 16, 237), Y(395, 8),
  [396, 16, '10.01.2025 12:58', '81', '50', W, ',,-,,-,4500,2300,1380,2040,T'],
  [397, 17, '', '81', '60', W, ',,,,,,,,,', 1], Y(398, 9),
  [399, 15, '10.01.2025 09:52', '81', '30', W, ',,-,,-,3900,2400,1380,2040,T'],
  [410, 16, '', '81', '40', W, ',,,,,,,,,'], [411, 16, '', '81', '50', W, ',,,,,,,,,'],
  [412, 16, '', '81', '60', W, ',,,,,,,,,'], [413, 17, '', '81', '70', W, ',,,,,,,,,', 1],
  K(414, 16, 159), Y(415, 8),
  [416, 15, '20.01.2025 12:17', '81', '20', W, ',-,,,-,2540,2160,1200,1745,F'],
  [417, 16, '', '81', '30', W, ',,,,,,,,,'],
  [418, 16, '13.01.2025 11:10', '81', '40', D, ',-,-,,-,2630,1550,1200,1340,T'],
  [419, 16, '17.01.2025 12:34', '81', '50', D, ',-,-,,-,2520,1500,1200,1345,T'],
  [420, 17, '', '81', '60', W, ',,,,,,,,,', 1], Y(421, 8),
  [422, 16, '', '81', '20', W, ',-,,,,,,,,'], [423, 16, '', '81', '30', W, ',,,,,,,,,'],
  [424, 16, '', '81', '40', W, ',,,,,,,,,'], [425, 16, '', '81', '50', W, ',,,,,,,,,'],
  [426, 16, '', '81', '60', W, ',,,,,,,,,', 1],
  K(427, 17, 292), Y(428, 8),
  [429, 16, '15.01.2025 14:10', '82', '50', T, ',,-,,-,4480,2318,1380,2040,T'],
  [430, 16, '17.01.2025 12:37', '82', '60', T, ',,-,,-,4490,2400,1380,2045,T'],
  [431, 17, '17.01.2025 12:36', '82', '70', T, ',,-,,-,4460,2200,1380,2045,T', 1],
  K(432, 16, 257), Y(433, 9),
  [434, 17, '', '82', '70', W, ',,,,,,,,,', 1], Y(435, 8),
  [436, 16, '', '82', '70', W, ',,,,,,,,,'],
  [437, 20, 'E'], [465, 20, 'E', 1]
];

let html = '<div class="colo"><i>1</i><i>2</i></div>';
html += '<div class="hdr">' + ',F,G,H,,O,P,Q,W,X,Y,Z,AA,AB,'.split(',').map(c => `<b>${c}</b>`).join('') + '</div>';
const H = (area, text, cls = '') => `<div class="${cls}" style="grid-area:${area}">${text}</div>`;
html += '<div class="cols fh">' +
  H('1/1', '1', 'n') + H('2/1', '2', 'n') + H('3/1', '3', 'n') +
  H('1/2/4/3', 'Dátum poslednej<br>aktualizácie', 's') + H('1/3/4/4', 'Číslo<br>nástroja', 'g1') +
  H('1/4/4/5', '<span>Operácia</span>', 'v') + H('1/5/2/8', 'Pracovné tlaky (KN)') +
  H('2/5/4/6', 'Baran', 'ba') + H('2/6/3/8', 'Pridržiavač') + H('3/6', 'Horný') + H('3/7', 'Dolný') +
  ['Brzda', 'Čapy nad<br>stôl', 'Dĺžka<br>nástroja', 'Šírka<br>nástroja', 'Výška<br>nástroja', 'Vzdialenosť<br>medzi drážkami<br>OT', '']
    .map((t, i) => H(`1/${i + 8}/3/${i + 9}`, t, 's sm7') + H(`3/${i + 8}`, i < 6 ? '(mm)' : '', 's')).join('') + '</div>';

for (const r of rows) {
  const [n, h, kind] = r;
  const open = (cls, last) => `<div class="cols gr ${cls}${last ? ' last' : ''}" style="height:${h}px"><div class="n">${n}</div>`;
  if (kind === 'Y') html += open('yr') + '<div class="bar"></div></div>';
  else if (kind === 'K') html += open('dk') + `<div class="bar"><i style="width:${r[3]}px"></i></div></div>`;
  else if (kind === 'E') html += open(r[3] ? 'em fin' : 'em') + '<div></div>'.repeat(13) + '</div>';
  else {
    const v = r[6].split(',');
    html += open('', r[7]) +
      `<div class="f ${kind ? 'tr' : 'k'}">${kind ? `<span data-w="80">${kind}</span>` : ''}</div>` +
      `<div class="g" style="background:${r[5]}"><span>${r[3]}</span>00</div>` +
      `<div class="h" style="background:${r[5]}">${r[4]}</div>` +
      v.map((t, i) => {
        const cls = i < 5 ? 'o' : i < 9 ? 'w' : t === 'F' ? 'fl rd' : t ? 'fl y' : 'fl w';
        const mark = i < 5 && t && !(i === 2 && n > 387) ? ' tr' : '';
        return `<div class="${cls}${mark}">${t}</div>`;
      }).join('') + '</div>';
  }
}
html += '<div class="smearcol"></div><div class="frz"></div>';
document.getElementById('grid').innerHTML = html;

// Condense or widen labels to their nominal width.
for (const el of document.querySelectorAll('[data-w]')) {
  const w = +el.dataset.w;
  const inner = document.createElement('span');
  inner.append(...el.childNodes);
  el.append(inner);
  inner.style.transform = `scaleX(${w / inner.offsetWidth})`;
  el.style.width = w + 'px';
}
```
